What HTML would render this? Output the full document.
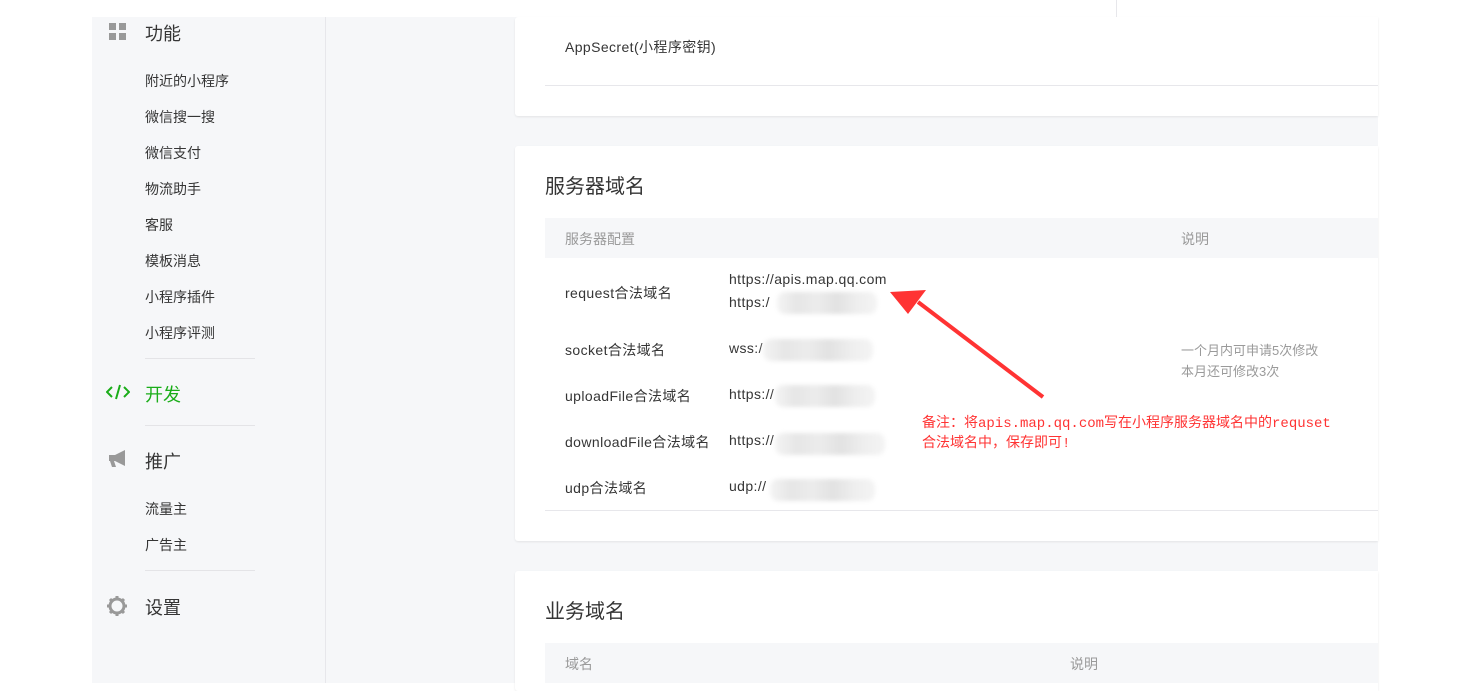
<!DOCTYPE html>
<html><head><meta charset="utf-8"><style>
*{margin:0;padding:0;box-sizing:border-box}
body{width:1481px;height:683px;background:#fff;position:relative;overflow:hidden;font-family:"Liberation Sans","Noto Sans CJK SC",sans-serif;color:#353535}
.abs{position:absolute}
.bg{left:92px;top:17px;width:1286px;height:666px;background:#f6f7f9}
.side{left:92px;top:17px;width:234px;height:666px;border-right:1px solid #e7e7eb}
.h{font-size:18px;color:#353535}
.s{font-size:14px;color:#353535}
.hr{height:1px;background:#e4e4e7;width:110px;left:145px}
.card{background:#fff;left:515px;width:863px;border-radius:3px 0 0 3px;box-shadow:0 1px 2px rgba(0,0,0,.08)}
.t14{font-size:14px}
.w{letter-spacing:0.4px}
.blur{position:absolute;height:22px;background:linear-gradient(90deg,#f4f4f4,#e6e6e6,#ececec,#e2e2e2,#eeeeee,#f4f4f4);filter:blur(2px);border-radius:8px}
.red{color:#f33;font-family:"Liberation Mono","Noto Sans CJK SC",monospace;font-size:14px}
</style></head><body>
<div class="abs" style="left:1116px;top:0;width:1px;height:17px;background:#e7e7eb"></div>
<div class="abs bg"></div>
<div class="abs side"></div>
<svg class="abs" style="left:109px;top:23px" width="18" height="18"><rect x="0" y="0" width="7" height="7" fill="#999"/><rect x="10" y="0" width="7" height="7" fill="#999"/><rect x="0" y="10" width="7" height="7" fill="#999"/><rect x="10" y="10" width="7" height="7" fill="#999"/></svg>
<div class="abs h" style="left:145px;top:20px">功能</div>
<div class="abs s" style="left:145px;top:71px">附近的小程序</div>
<div class="abs s" style="left:145px;top:107px">微信搜一搜</div>
<div class="abs s" style="left:145px;top:143px">微信支付</div>
<div class="abs s" style="left:145px;top:179px">物流助手</div>
<div class="abs s" style="left:145px;top:215px">客服</div>
<div class="abs s" style="left:145px;top:251px">模板消息</div>
<div class="abs s" style="left:145px;top:287px">小程序插件</div>
<div class="abs s" style="left:145px;top:323px">小程序评测</div>
<div class="abs hr" style="top:358px"></div>
<svg class="abs" style="left:106px;top:384px" width="24" height="16"><path d="M6 3L1 8l5 5M18 3l5 5-5 5M14 1L10 15" stroke="#1aad19" stroke-width="2" fill="none"/></svg>
<div class="abs h" style="left:145px;top:381px;color:#1aad19">开发</div>
<div class="abs hr" style="top:425px"></div>
<svg class="abs" style="left:108px;top:449px" width="22" height="20"><path d="M1 6h6l10-5v16L7 12H6l2 6H4L2 12H1z" fill="#999"/></svg>
<div class="abs h" style="left:145px;top:448px">推广</div>
<div class="abs s" style="left:145px;top:499px">流量主</div>
<div class="abs s" style="left:145px;top:535px">广告主</div>
<div class="abs hr" style="top:570px"></div>
<svg class="abs" style="left:106px;top:595px" width="22" height="22" viewBox="0 0 22 22"><circle cx="11" cy="11" r="7" stroke="#999" stroke-width="3" fill="none"/><g stroke="#999" stroke-width="3"><path d="M11 1v4M11 17v4M1 11h4M17 11h4M4 4l3 3M15 15l3 3M18 4l-3 3M4 18l3-3"/></g></svg>
<div class="abs h" style="left:145px;top:594px">设置</div>
<div class="abs card" style="top:17px;height:99px"></div>
<div class="abs t14 w" style="left:565px;top:37px">AppSecret(小程序密钥)</div>
<div class="abs" style="left:545px;top:85px;width:833px;height:1px;background:#e7e7eb"></div>
<div class="abs card" style="top:146px;height:395px"></div>
<div class="abs" style="left:545px;top:170px;font-size:20px">服务器域名</div>
<div class="abs" style="left:545px;top:218px;width:833px;height:40px;background:#f6f7f9"></div>
<div class="abs t14" style="left:565px;top:229px;color:#9a9a9a">服务器配置</div>
<div class="abs t14" style="left:1181px;top:229px;color:#9a9a9a">说明</div>
<div class="abs t14 w" style="left:565px;top:283px">request合法域名</div>
<div class="abs t14 w" style="left:729px;top:271px">https://apis.map.qq.com</div>
<div class="abs t14 w" style="left:729px;top:294px">https:/</div>
<div class="blur" style="left:777px;top:292px;width:100px"></div>
<div class="abs t14 w" style="left:565px;top:340px">socket合法域名</div>
<div class="abs t14 w" style="left:729px;top:340px">wss:/</div>
<div class="blur" style="left:763px;top:339px;width:110px"></div>
<div class="abs t14 w" style="left:565px;top:386px">uploadFile合法域名</div>
<div class="abs t14 w" style="left:729px;top:386px">https://</div>
<div class="blur" style="left:775px;top:385px;width:100px"></div>
<div class="abs t14 w" style="left:565px;top:432px">downloadFile合法域名</div>
<div class="abs t14 w" style="left:729px;top:432px">https://</div>
<div class="blur" style="left:775px;top:433px;width:110px"></div>
<div class="abs t14 w" style="left:565px;top:478px">udp合法域名</div>
<div class="abs t14 w" style="left:729px;top:478px">udp://</div>
<div class="blur" style="left:770px;top:479px;width:105px"></div>
<div class="abs" style="left:1181px;top:340px;font-size:13px;color:#9a9a9a;line-height:21px">一个月内可申请5次修改<br>本月还可修改3次</div>
<div class="abs" style="left:545px;top:510px;width:833px;height:1px;background:#e7e7eb"></div>
<div class="abs red" style="left:922px;top:414px;line-height:20px">备注：将apis.map.qq.com写在小程序服务器域名中的requset<br>合法域名中，保存即可!</div>
<svg class="abs" style="left:880px;top:280px" width="180" height="130"><path d="M163 117L38 22" stroke="#f33" stroke-width="4"/><path d="M10 12L46 10 28 34z" fill="#f33"/></svg>
<div class="abs card" style="top:571px;height:120px"></div>
<div class="abs" style="left:545px;top:595px;font-size:20px">业务域名</div>
<div class="abs" style="left:545px;top:643px;width:833px;height:40px;background:#f6f7f9"></div>
<div class="abs t14" style="left:565px;top:654px;color:#9a9a9a">域名</div>
<div class="abs t14" style="left:1070px;top:654px;color:#9a9a9a">说明</div>
</body></html>
